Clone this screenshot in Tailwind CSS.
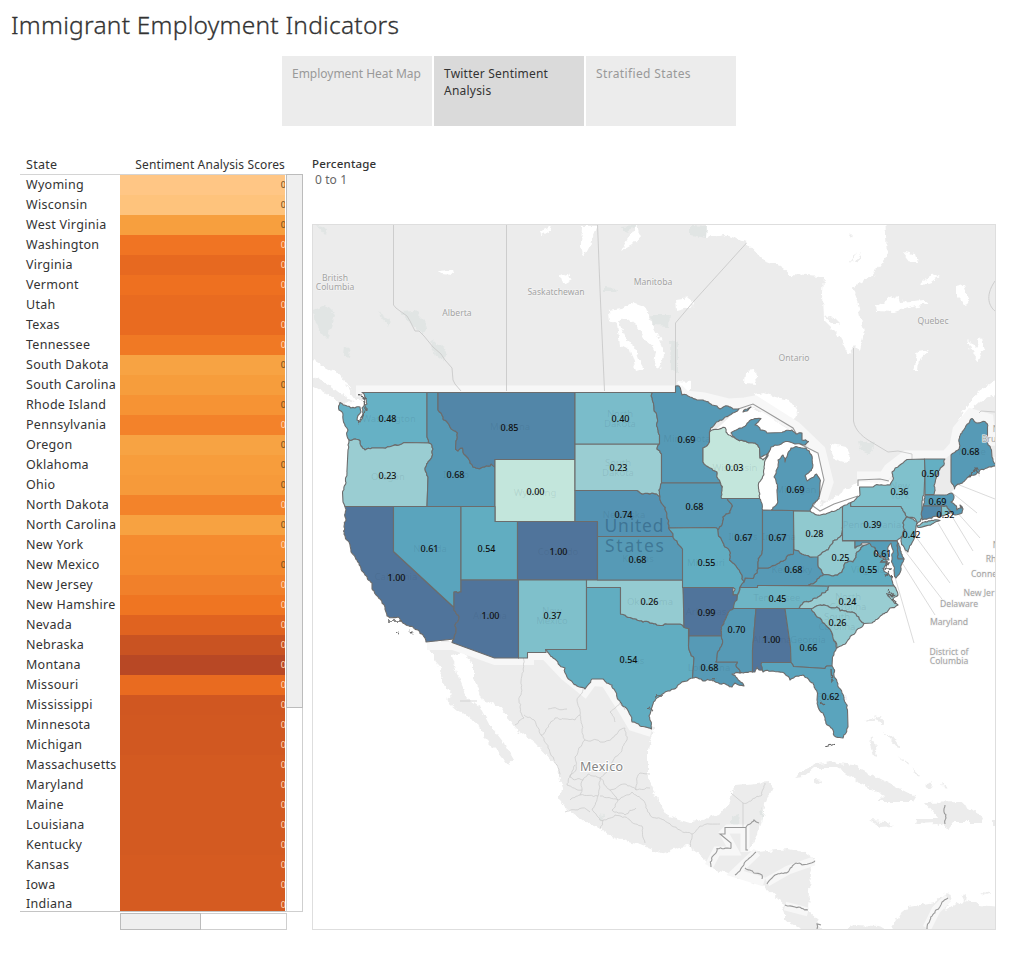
<!DOCTYPE html>
<html lang="en">
<head>
<meta charset="utf-8">
<title>Immigrant Employment Indicators</title>
<script src="https://cdn.jsdelivr.net/npm/@tailwindcss/browser@4"></script>
</head>
<body class="bg-white w-[1015px] h-[963px] overflow-hidden font-['Noto_Sans',sans-serif] text-[#333]">
<h1 class="pl-[11px] pt-[8px] h-[56px]"><svg class="block" width="400" height="36"><text x="0" y="26" textLength="388" font-size="24.5" font-weight="300" fill="#333" stroke="#333" stroke-width=".3">Immigrant Employment Indicators</text></svg></h1>
<nav class="flex gap-[2px] ml-[282px] h-[70px] text-[12px] leading-[17px] tracking-[0.19px]">
  <div class="w-[150px] bg-[#ececec] text-[#999] pl-[10px] pt-[9px] whitespace-nowrap tracking-[-0.02px]">Employment Heat Map</div>
  <div class="w-[150px] bg-[#dadada] text-[#333] pl-[10px] pt-[9px] tracking-[0.22px]">Twitter Sentiment<br>Analysis</div>
  <div class="w-[150px] bg-[#ececec] text-[#999] pl-[10px] pt-[9px] tracking-[0.36px]">Stratified States</div>
</nav>
<main class="flex mt-[29px]">
  <section class="ml-[20px] w-[292px]">
    <div class="flex h-[20px] items-center text-[12px] border-b border-[#d4d4d4] w-[266px] whitespace-nowrap">
      <span class="w-[100px] pl-[6px] pt-px text-[12.5px] tracking-[0.3px]">State</span><span class="flex-1 text-right pr-[1px] pt-px tracking-[0.12px]">Sentiment Analysis Scores</span>
    </div>
    <div class="flex">
      <div id="rows" class="w-[266px] h-[737px] overflow-hidden border-b border-[#c4c4c4]"></div>
      <div class="w-[17px] h-[738px] -mt-px border-[1.5px] border-[#cfcfcf] bg-white"><div class="-m-px h-[534px] w-[17px] border-[1.5px] border-[#bcbcbc] bg-[#efefef]"></div></div>
    </div>
    <div class="ml-[99.5px] mt-[1px] w-[167px] h-[17px] border border-[#cfcfcf] bg-white"><div class="-m-px w-[81px] h-[17px] border border-[#bcbcbc] bg-[#efefef]"></div></div>
  </section>
  <section class="w-[684px]">
    <div class="h-[69px] pt-px text-[12px] leading-[16px] tracking-[0.1px]"><div class="font-medium text-[11.5px] tracking-[0.2px] text-[#333]">Percentage</div><div class="pl-[3px] text-[#666]">0 to 1</div></div>
    <svg id="map" class="block" width="684" height="706" viewBox="312 224 684 706" font-family="'Noto Sans',sans-serif">
      <defs><filter id="rough" x="0" y="0" width="1" height="1"><feTurbulence type="fractalNoise" baseFrequency=".14" numOctaves="3" seed="4"/><feDisplacementMap in="SourceGraphic" scale="7" xChannelSelector="R" yChannelSelector="G"/></filter>
      <filter id="coast" x="0" y="0" width="1" height="1"><feTurbulence type="fractalNoise" baseFrequency=".25" numOctaves="3" seed="9"/><feDisplacementMap in="SourceGraphic" scale="5" xChannelSelector="R" yChannelSelector="G"/></filter></defs>
      <rect x="312" y="224" width="684" height="706" fill="#fff"/>
      <g filter="url(#rough)">
        <rect x="300" y="210" width="710" height="740" fill="none"/>
        <g fill="#ececec">
        <path d="M305 215H706V238L725 235 746 242 763 260 783 267 790 275 823 277 822 293 823 320 840 337 849 353 855 345 860 350 864 332 858 303 852 287 873 275 887 257 885 215H1005V374L978 392 957 420 962 418 980 402 1005 388V450L990 462H952L945 495H920L895 480 870 483 858 481 830 500 820 507 823 480 818 453 798 443 770 415 745 405 735 420 705 440 680 400H356L334 372 305 357Z"/>
        <path d="M305 374 325 382 345 397 355 402 340 403 325 393 305 381Z"/>
        <path d="M427 642 438 667 444 685 452 695 446 700 458 710 477 722 483 737 498 752 508 765 514 760 504 743 490 725 481 708 467 698 458 677 452 655 465 653 473 665 473 677 483 700 500 707 515 728 535 743 558 767 560 780 563 788 558 797 565 807 585 822 600 828 615 838 640 845 661 853 679 847 687 846 704 858 713 868 727 874 754 882 763 885 781 902 785 913 785 920 808 932H822L819 920 808 910 810 873 815 860 804 852 788 849 758 852 748 851 758 833 763 810 773 787 769 782 735 785 731 792 729 803 719 815 689 823 669 817 656 797 648 777 648 750 654 729 630 722 610 680 590 678 585 689 567 677 546 651 527 656 495 657 454 640Z"/>
        <path d="M794 778 811 765 831 762 854 765 877 777 916 797 913 802 877 802 884 795 861 783 838 768 815 768 804 777Z"/>
        <path d="M925 803 961 802 983 817 981 822 954 822 948 830 938 823 916 824 917 818 938 818Z"/>
        <path d="M869 820 885 821 894 826 880 827ZM815 779 822 780 819 784 814 783Z"/>
        <path d="M840 932 855 925 878 926 888 932H890L904 908 935 902 948 892 951 897 945 910 952 906 967 900 977 905 1005 907V935Z"/>
        <path d="M871 737 875 743 877 756 873 755 870 745ZM864 721 880 716 884 724 881 726 877 719 866 723ZM883 732 892 737 900 748 898 749ZM898 757 910 762 909 764ZM912 767 920 776 918 777ZM925 786 932 781 930 788ZM942 783 948 787 943 786ZM962 896 966 894 965 902ZM992 820H1000V825H992ZM980 892 990 893 988 896Z"/>
        <path d="M850 262 857 252 852 263ZM855 263 862 250 858 263ZM849 235 852 233 851 238Z"/>
        </g>
        <g fill="#fff">
        <path d="M437 271 452 270 453 275 440 274ZM583 226 598 226 592 241 584 256 582 245ZM638 224 641 235 632 245 621 251 627 240ZM540 231 552 226 550 230 541 235ZM560 277 569 274 571 279 562 284Z"/>
        <path d="M608 310 622 308 632 302 646 307 652 325 660 340 664 355 660 370 654 367 656 350 645 340 634 322 624 318 618 320 625 338 634 345 640 362 644 369 637 371 630 350 620 345 617 325 609 320ZM676 300 690 298 693 306 677 310ZM678 380 690 381 690 393 680 391ZM746 371 755 370 757 384 745 383ZM753 395 763 393 780 398 789 400 798 412 794 420 760 405Z"/>
        <path d="M903 253 915 255 917 262 910 262ZM919 283 932 276 940 275 930 282 921 285ZM956 287 964 285 970 302 965 304 956 295ZM875 307 887 300 898 296 900 302 925 300 930 304 912 307 895 312 876 311ZM914 370 918 352 930 350 920 359 919 370ZM968 340 975 347 981 338 984 350 978 362 973 355ZM828 443 845 447 850 458 845 463 835 460ZM330 369 336 371 346 383 352 389 342 384 335 376Z"/>
        </g>
        <path d="M824 316 832 315 841 324 833 324Z" fill="#ececec"/>
        <g fill="#e1e5e4"><path d="M313 310 325 305 335 315 328 340 315 325ZM400 312 415 311 428 324 424 334 412 325ZM430 340 447 348 445 361 436 355ZM378 312 390 320 388 326ZM651 315 669 315 668 326 653 325ZM670 340 678 342 678 372 671 370ZM620 226 640 225 625 232ZM690 225 707 226 706 238 690 235ZM605 287 617 288 616 292 605 292ZM858 440 875 443 870 453 860 450ZM598 814 604 815 600 822ZM760 808 764 812 762 822ZM732 817 739 815 738 823 732 823ZM345 346 351 350 350 358 344 356ZM317 226 327 228 326 236Z"/></g>
      </g>
      <g fill="none" stroke="#f7f7f7" stroke-width="11"><path d="M356 391H680L685 396 704 398 729 404 745 403 755 401 796 427 820 450 828 482 822 500M857 477 884 477 889 469 906 456 946 456 955 446 958 430 971 414 988 419 991 446"/><path d="M427 646 453 646 495 661 530 661 530 656 545 656 564 676 585 693 593 682 605 683 622 710 632 727 651 733" stroke-width="8"/><path d="M709 866 717 851H734L724 833 728 829H745V852M757 852 735 873 764 882M767 882 788 870 814 861M785 906 808 912M948 898 936 910 927 928" stroke-width="9"/></g>
      <path d="M738 409 755 410 790 430 800 444 818 455 824 480 816 500 820 509 858 492 858 482 888 483 890 488 860 500 810 516 765 514 758 500 758 460 705 440Z" fill="#fff"/>
      <g fill="none" stroke="#c9c9c9"><path stroke-width=".9" d="M393.500 224V305L396 308 400 311 407 316 410 321 415 331 419 331 424 336 433 347 441 354 445 360 452 368 453 380 455 384 461 391M506.500 224V391M597.500 224 600 290 604.500 391M746.500 243 694 301 675.500 323V386M853.500 348V421C855 430 862 436 868 440L888 452 898 451 912 454V459M995 281C984 297 990 307 995 311M979 413 981 411 995 412"/>
      <path class="wobbly" stroke-width=".7" d="M523 657 521 695 519 700 524 718 515 725M524 715 535 721 541 735 555 718 575 720 580 715 577 700 583 688M541 735 557 765 560 777M580 715 585 740 600 742 612 738 625 728M585 740 575 757 576 770 570 777M615 722 610 712 620 703 625 710M625 728 627 740 615 757 610 770 600 778 588 774 583 780 570 777M600 778 610 790 625 784 636 790 650 788M583 780 580 795 570 800M600 778 598 796 580 795M600 796 618 800 632 792 643 800 650 815 664 820 680 830 692 834 700 826 720 824M598 796 592 809 600 820 615 815 630 820 642 826 645 843M610 790 618 800 612 810 625 815 636 808M565 812 582 808 590 812M600 829 603 820M690 847 692 834M743 827V803L731 793M743 803 762 795 765 783M548 709 567 709M460 701H477M636 790 640 773 650 774M575 765 567 785 582 790"/></g>
      <g class="wobblies" fill="none" stroke="#999" stroke-width="1.100"><path d="M738 409 753 404 793 428 797 435 800 444 818 453 824 480 819 497 813 506 820 511 834 504 858 496M858 486V480L880 479 889 481M731 848.500V843L720 834H725V827.500H746V850H748"/><path class="wobbly" d="M711 867 712 857 717 848.500 731 848.500M746 827 750 824 754 820 759 823M756 852 745 862 742 867 735 875M745 868 754 873 762 875 762 879M767 884 772 878 775 875 788 872 796 863 802 865 815 861M785 905 795 907 808 910M945 805 944 812 946 818 945 824M948 898 942 902 936 910 930 920 927 929M817 929 817 924 821 925"/></g>
      <g stroke="#d2d2d2" stroke-width=".8"><path d="M939 477 995 499M944 486 977 513M955 510 980 538M947 508 973 551M938 523 963 565M916 537 950 583M905 551 945 603M901 561 935 615M893 570 914 643"/></g>
      <path d="M945 459 950 455 951 482 954 490 943 495H934L938 472 944 465Z" fill="#ebebeb"/>
      <g id="states" stroke="#6c6c6c" stroke-width="1.100" stroke-linejoin="round"></g>
      <g filter="url(#coast)"><path d="M359 394 365 400 366 409 363 416 358 423M366 398 364 405M388 621H401M886 557 881 562 888 562 884 569 891 569 886 575 893 576M887 590 895 596 887 595 896 603M648 708 654 711M656 696 663 696M712 680 716 678M831 669 832 683M820 702 824 705M968 478 976 468 980 475M397 632 399 633M410 631 413 634M835 744 826 747" stroke="#666" stroke-width="1.300" fill="none"/></g>
      <g id="names" fill="#203a50" fill-opacity=".11" text-anchor="middle" font-size="9.500"></g>
      <g fill="#1e4868" fill-opacity=".42" font-size="17.500"><text x="604.500" y="532" textLength="59">United</text><text x="605" y="551.500" textLength="59">States</text></g>
      <text x="580" y="770.500" font-size="12.500" textLength="43" fill="#858585" stroke="#fff" stroke-width="2" paint-order="stroke">Mexico</text>
      <g id="places" fill="#a3a3a3" font-size="8.600" text-anchor="middle" stroke="#f4f4f4" stroke-width="1.200" paint-order="stroke"></g>
      <g id="values" fill="#101010" font-size="9" font-weight="500" text-anchor="middle"></g>
      <rect x="312.500" y="224.500" width="683" height="705" fill="none" stroke="#dedede"/>
    </svg>
  </section>
</main>
<script>
const rows=[["Wyoming","#ffc685"],["Wisconsin","#fec37c"],["West Virginia","#f79f3e"],["Washington","#f07423"],["Virginia","#e76920"],["Vermont","#ee7020"],["Utah","#e96b20"],["Texas","#e96b20"],["Tennessee","#f07924"],["South Dakota","#f7a343"],["South Carolina","#f69d3c"],["Rhode Island","#f69334"],["Pennsylvania","#f3822a"],["Oregon","#f7a343"],["Oklahoma","#f79d3c"],["Ohio","#f69a3a"],["North Dakota","#f3832a"],["North Carolina","#f7a241"],["New York","#f58b2f"],["New Mexico","#f48a2e"],["New Jersey","#f1802a"],["New Hamshire","#ef7522"],["Nevada","#e06320"],["Nebraska","#c95322"],["Montana","#b84825"],["Missouri","#e96b20"],["Mississippi","#d05721"],["Minnesota","#d15821"],["Michigan","#d15821"],["Massachusetts","#d35a21"],["Maryland","#d35a21"],["Maine","#d35a21"],["Louisiana","#d35a21"],["Kentucky","#d35a21"],["Kansas","#d55b21"],["Iowa","#d55b21"],["Indiana","#d55b21"]];
const dark=[0,1,2,9,10,11,13,14,15,17,19];
document.getElementById('rows').innerHTML=rows.map((r,i)=>`<div class="flex h-[20px] whitespace-nowrap"><span class="w-[100px] pl-[6px] text-[12.5px] tracking-[0.28px] ${i==36?'leading-[17px]':'leading-[19px]'}">${r[0]}</span><span class="w-[165px] overflow-hidden text-right text-[9px] leading-[20px]" style="background:${r[1]};color:${dark.includes(i)?'#6b4a20':'#ffd9bd'}"><span class="-mr-[1px]">0</span></span></div>`).join('');
const S=[
["#66b1c5","362 392.500 427 392.500 427 437 429 443 405 442.500 392 446 383 448 372 448 365 450 361 446 360 441 355 439 349 440 347 436 348 430 346 427 343 415 339 410 340 402.500 347 406 355 408 360 407 361 412 357 420 360 422 363 414 362 408 367 404 365 398"],
["#9acdd2","349 440 355 439 360 441 361 446 365 450 372 448 383 448 392 446 405 442.500 429 443 433 449 430 460 425 469 428 477 427 506.500 345 506.500 343 502 342.500 492 347 470 348 450"],
["#569ab6","427 392.500 438 392.500 438 410 441 413 443 419 450 427 457.500 433 456 441 455.500 449 458 451 462.500 448 465 455 468 458 470 463 473 467 476 468 483 467 490 466 491 464 495 467 495 506.500 427 506.500 428 477 425 469 430 460 433 449 429 443 427 437"],
["#5286a8","438 392.500 575 392.500 575 459.500 495 459.500 495 467 491 464 490 466 483 467 476 468 473 467 470 463 468 458 465 455 462.500 448 458 451 455.500 449 456 441 457.500 433 450 427 443 419 441 413 438 410"],
["#c3e6dc","495 459.500 575 459.500 575 521.500 495 521.500"],
["#50749b","345 506.500 393.500 506.500 393.500 551.500 454 607.500 456 613 459 618 455 625 456 632 454 639 426 642 423 635 413 627 402 622 398 617 387 616 385 607 380 599 372 589 372 583 365 575 359 563 351 552 349 542 343.500 531 346 520"],
["#5aa4bd","393.500 506.500 461 506.500 461 592 458 593 454 592 454 607.500 393.500 551.500"],
["#61adc1","461 506.500 495 506.500 495 521.500 517.500 521.500 517.500 580 461 580"],
["#50749b","517.500 521.500 597.500 521.500 597.500 580 517.500 580"],
["#50749b","461 580 518.500 580 518.500 658 494.500 658 452 642.500 454 639 456 632 455 625 459 618 456 613 454 607.500 454 592 458 593 461 592"],
["#7fc0cb","518.500 580 586.500 580 586.500 649.500 545.500 649.500 546 652.500 527.500 652.500 527.500 658 518.500 658"],
["#61adc1","586.500 587.500 620.500 587.500 620.500 614 630 617.500 636 619 643 622 650 623 657 625 667 624 680 624 688.500 628.500 688.500 646 694 658 692.500 678 687 681 678 685 670 691 660 696 652 707 649 716 651.500 729 640 726 632 722 625 707 617 697 612 685 603 679 592 679 588 685 585 689 573 683 567 677 565 668 553 658 545.500 649.500 586.500 649.500"],
["#94cbd1","586.500 580 683 580 684 607 684 627 680 624 667 624 657 625 650 623 643 622 636 619 630 617.500 620.500 614 620.500 587.500 586.500 587.500"],
["#569ab6","597.500 536.500 673 536.500 677 541 682.500 549 683 580 597.500 580"],
["#5493b3","575 490.500 637 490.500 643 494 652 493 660 496.500 663 505 667 517 668.500 528 673 536.500 597.500 536.500 597.500 521.500 575 521.500"],
["#9acdd2","575 444 659.500 444 657 449 661.500 454 661.500 483 659 490 660 496.500 652 493 643 494 637 490.500 575 490.500"],
["#7abcca","575 392.500 652.500 392.500 654 407 657 423 659.500 435 659.500 444 575 444"],
["#569ab6","652.500 392.500 675.500 392.500 675.500 386 679 386 682 395 690 397 697 400 703 400 712 405 717 406 720 409 728 406 733 409 739 409 720 420 709.500 432 709.500 442 703 448 703 462 717 472 720.500 483 661.500 483 661.500 454 657 449 659.500 444 659.500 435 657 423 654 407"],
["#569ab6","661.500 483 720.500 483 722 492 727 498 732.500 506 730 513 723 517 722 525 718 530 715 527.500 668.500 528 667 517 663 505 660 496.500 659 490"],
["#61adc1","668.500 528 715 527.500 718 530 718.500 536 725 547 730.500 553 729.500 560 740 572 742 579 744 582 740 587 737.500 595 733 595 735 589 733 587.500 682.500 587.500 682.500 549 677 541 673 536.500"],
["#50749b","683 587.500 733 587.500 733 595 737.500 595 737 600 733.500 608 728 613 723 625 721.500 636 689 636 689 628.500 684 627"],
["#569ab6","689 636 721.500 636 722.500 640 720 648 716 662 737.500 662 736.500 667 740 673 732 674 737 678 744 686 735 683 732 687 727 685 720 684 712 680 703 681 692.500 678 694 658 688.500 646"],
["#569ab6","733.500 608.500 756 608.500 752.500 650 752.500 672 740 673 736.500 667 737.500 662 716 662 720 648 722.500 640 721.500 636 723 625 728 613"],
["#50749b","756 608.500 785 608.500 790.500 647 791 662.500 761.500 662.500 763 670 759 670 757 667 755 672 752.500 672 752.500 650"],
["#58a0ba","785 608.500 811.500 608.500 820 618 832 633 836.500 648 832.500 657 832 666 827 666 825 668.500 793.500 666.500 791 662.500 790.500 647"],
["#5aa4bd","761.500 662.500 791 662.500 793.500 666.500 825 668.500 827 666 832 666 835 678 842 693 847.500 710 848 727 843 738 836 737 833 730 825 720 823 713 818 707 817 700 817.500 693 813 683 803 675 797 676 790 680 785 674 773 671 763 672"],
["#6eb5c5","740 587.500 757.500 587.500 757.500 585.500 829 586 828 590 822 593 813 599 803 603 799 608.500 733.500 608.500 737 600 737.500 595"],
["#569ab6","744 582 745 578 753 578.500 757 573 758 568 768 568 777 564 785 560 788 555 793 554 794 549.500 802 554 810 557 818 556 818 565 822 572 824 574.500 811 584 808 585.500 757.500 585.500 757.500 587.500 740 587.500"],
["#569ab6","721.500 498.500 759.500 498.500 762.500 510 762.500 550 758 562 758 568 757 573 753 578.500 745 578 744 582 742 579 740 572 729.500 560 730.500 553 725 547 718.500 536 718 530 722 525 723 517 730 513 732.500 506 727 498"],
["#569ab6","762.500 510 793.500 510.500 793.500 554 788 555 785 560 777 564 768 568 758 568 758 562 762.500 550"],
["#90c9cf","793.500 511 810 511 817 515 828 513 842.500 506.500 842.500 527 840 537 833 541 828 550 823 552 818 557 810 557 802 554 794 549.500"],
["#94cbd1","842.500 527 842.500 541 855 541 855 548 860 544 866 545 857 552 853 562 845 563 842 572 832 576 824 574.500 822 572 818 565 818 556 823 552 828 550 833 541 840 537"],
["#61adc1","811 584 824 574.500 832 576 842 572 845 563 853 562 857 552 866 545 870 543 874 547 875 553 883 558 887 563 884 571 892 577 894 586 829 586 808 585.500"],
["#99cdd2","829 586 894 586 898 595 892 600 898 605 890 608 882 615 872 623 864 623.500 852 612 840 611 837 607 822 605.500 811.500 608.500 799 608.500 803 603 813 599 822 593 828 590"],
["#94cbd1","811.500 608.500 822 605.500 837 607 840 611 852 612 864 623.500 860 628 848 640 837 648 832 633 820 618"],
["#7abcca","842.500 506.500 851 502.500 851 506.500 901 506.500 905 513 907.500 517 903 523 905 530 902 536 897 540.500 842.500 540.500"],
["#80c1cc","851 502.500 860 495 859.500 487 873 487 890 485 893.500 478 892 472 907 459.500 924.500 459 925 470 924 495 922 501 922 518 917 524 916 520 907.500 517 901 506.500 851 506.500"],
["#80c1cc","917 526 927 522 940 520.500 932 524 918 527.500"],
["#64afc3","924.500 459 945 459 944 465 938 472 934 494.500 925 494.500 925 470"],
["#569ab6","951 455 958 450 959.500 438 965 428 972 418.500 977 423 985 421.500 987.500 427 987.500 443 991.500 450 992 457 996 464 987 468 980 470 977 473 967 478 958 484 954.500 489 951 482"],
["#569ab6","925 495 943 495 951 493 954 497 951 502 955 505 957 510 962 508 960 505 963 509 962 513 955 515 948 508.500 946.500 506 923.500 506"],
["#5089ab","923 506 941.500 506 941.500 516 922 520"],["#82c2cc","941.500 506 946.500 506 950 513 941.500 516"],
["#74b9c8","907.500 517 917 522 916 528 914.500 537 908 552 904 547 901 541 905 530 903 523"],
["#569ab6","897 541 900 547 904 559 898 559"],
["#559db8","855 541 897 541 898 559 904 559 901 570 896 578 894 570 892 560 893 550 891 543 888 550 889 560 883 557 877 552 874 547 869 543 862 543 855 548"],
["#c3e6dc","709.500 432 718 429.500 725 427.500 726 432 735 438 755 443 759.500 448 760 458 763 460 770 449 764 467 758.500 487 759.500 498.500 721.500 498.500 720.500 483 717 472 703 462 703 448 709.500 442"],
["#569ab6","731 433 742 428 753 419.500 761 418.500 755 425 767 433 782 432.500 792 430 796 434 802 433 802 440 808.500 441.500 805 445 795 444 788 441.500 779 445 771 447 765 455 760 458 759.500 448 755 443 735 438"],
["#569ab6","796 446.500 806 448 811.500 455 812.500 468 805 476 807 481 816.500 474 820 483 819.500 496 813 504 810 511 771.500 510 777.500 500 777 490 774 477 778 460 783 455 785 462 787.500 455 791 448"],
["#569ab6","743 412 749 408 751 407 747 411"]];
// Natural borders get fine detail; the offset depends only on an edge's end points, so neighbouring states stay joined.
const hash=(a,b)=>{const v=Math.sin(a*12.9898+b*78.233)*43758.5453;return v-Math.floor(v)-.5};
function split(a,b){
  const dx=b[0]-a[0],dy=b[1]-a[1],len=Math.hypot(dx,dy);
  if(len<2.6)return [b];
  const h=hash(a[0]+b[0],a[1]+b[1])*Math.min(len*.34,2.6);
  const flip=(dx>0||(dx===0&&dy>0))?1:-1;
  const m=[(a[0]+b[0])/2-dy/len*h*flip,(a[1]+b[1])/2+dx/len*h*flip];
  return [...split(a,m),...split(m,b)];
}
function rough(a,b){
  const dx=Math.abs(b[0]-a[0]),dy=Math.abs(b[1]-a[1]),len=Math.hypot(dx,dy);
  return (len>23.5||dx<.6&&len>5||dy<.6&&len>5||len>19&&(dx<3||dy<3))?[b]:split(a,b);
}
const pairs=s=>{const n=s.trim().split(/\s+/).map(Number),p=[];for(let i=0;i<n.length;i+=2)p.push([n[i],n[i+1]]);return p};
const fmt=p=>p.map(q=>q[0].toFixed(1)+','+q[1].toFixed(1)).join(' ');
document.getElementById('states').innerHTML=S.map(s=>{const p=pairs(s[1]);return `<polygon fill="${s[0]}" points="${fmt(p.flatMap((a,i)=>rough(a,p[(i+1)%p.length])))}"/>`}).join('');
document.querySelectorAll('.wobbly').forEach(e=>{
  const d=e.getAttribute('d');
  e.setAttribute('d',d.split('M').filter(Boolean).map(s=>{
    if(/[HVL]/.test(s))return 'M'+s;
    const p=pairs(s);return 'M'+fmt([p[0],...p.slice(1).flatMap((b,i)=>split(p[i],b))]);
  }).join(''));
});
const T=a=>a.map(v=>`<text x="${v[1]}" y="${v[2]}">${v[0]}</text>`).join('');
document.getElementById('names').innerHTML=T([["Washington",389,422],["Oregon",388,480],["Idaho",456,478],["Montana",510,430],["Wyoming",535,496],["North",620,417],["Dakota",620,427],["South",618,466],["Dakota",618,476],["Minnesota",687,442],["Wisconsin",735,471],["Nebraska",624,518],["Kansas",638,562],["Colorado",558,555],["California",396,580],["Nevada",430,552],["Arizona",490,619],["New",552,614],["Mexico",552,624],["Oklahoma",650,605],["Texas",632,664],["Missouri",706,566],["Arkansas",706,615],["Louisiana",709,671],["Alabama",772,643],["Georgia",808,643],["Illinois",743,540],["Indiana",779,540],["Michigan",796,493],["Kentucky",792,573],["Tennessee",777,601],["Virginia",868,573],["North",848,600],["Carolina",848,610],["South",837,620],["Carolina",837,630],["Pennsylvania",872,528],["New",900,489],["York",900,499],["Maine",972,455],["Florida",832,700]]);
document.getElementById('places').innerHTML=T([["British",335,281],["Columbia",335,290],["Alberta",457,316],["Saskatchewan",556,295],["Manitoba",653,285],["Ontario",794,361],["Quebec",933,324],["Delaware",959,607],["Maryland",949,625],["District of",949,655],["Columbia",949,664],["Conne",984,577],["New Jer",979,596],["Rh",991,562],["N",996,548],["Bru",989,442],["N",996,432]]);
document.getElementById('values').innerHTML=T([["0.48",387.500,422],["0.23",387.500,479],["0.68",455.500,478],["0.85",509.500,431],["0.00",535.500,495],["0.40",620.500,422],["0.23",618.500,471],["0.69",686.500,443],["0.03",734.500,471],["0.68",694.500,510],["0.74",623.500,518],["0.68",637.500,563],["1.00",558.500,555],["0.61",429.500,552],["0.54",486.500,552],["1.00",396.500,581],["1.00",490.500,619],["0.37",552.500,619],["0.26",649.500,605],["0.54",628.500,663],["0.55",706.500,566],["0.99",706.500,616],["0.68",709.500,671],["0.70",736.500,633],["1.00",771.500,643],["0.66",808.500,651],["0.62",830.500,700],["0.67",743.500,541],["0.67",777.500,541],["0.69",795.500,493],["0.28",814.500,537],["0.25",840.500,561],["0.68",793.500,573],["0.45",777.500,602],["0.55",868.500,573],["0.24",847.500,605],["0.26",837.500,626],["0.61",882.500,557],["0.39",872.500,528],["0.36",899.500,495],["0.50",930.500,477],["0.68",970.500,455],["0.69",937.500,505],["0.32",945.500,518],["0.42",911.500,538]]);
</script>
</body>
</html>
